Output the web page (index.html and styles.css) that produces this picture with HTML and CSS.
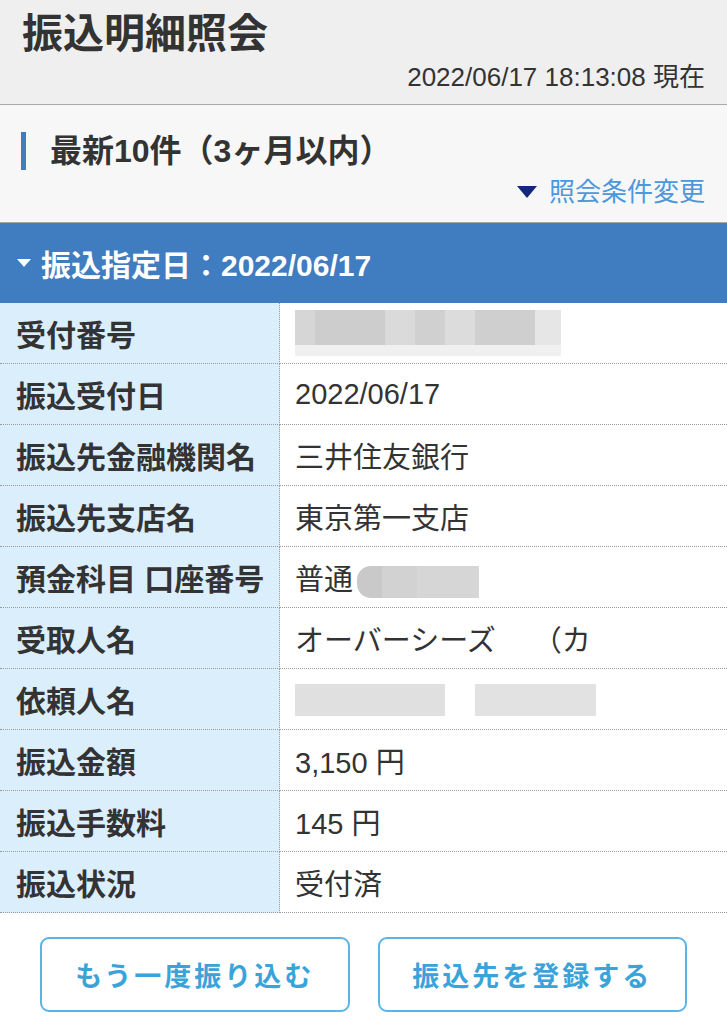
FILE: index.html
```html
<!DOCTYPE html>
<html lang="ja">
  <head>
    <meta charset="UTF-8" />
    <title>振込明細照会</title>
    <link rel="stylesheet" href="styles.css">
  </head>
  <body>
    <header class="page-head">
      <h1>振込明細照会</h1>
      <p class="stamp">2022/06/17 18:13:08 現在</p>
    </header>

    <section class="filter">
      <h2>最新10件（3ヶ月以内）</h2>
      <a class="change" href="#"><span class="tri"></span>照会条件変更</a>
    </section>

    <div class="band"><span class="tri-w"></span>振込指定日：2022/06/17</div>

    <table class="detail">
      <tr>
        <th>受付番号</th>
        <td><span class="mask mask-num"></span></td>
      </tr>
      <tr>
        <th>振込受付日</th>
        <td>2022/06/17</td>
      </tr>
      <tr>
        <th>振込先金融機関名</th>
        <td>三井住友銀行</td>
      </tr>
      <tr>
        <th>振込先支店名</th>
        <td>東京第一支店</td>
      </tr>
      <tr>
        <th>預金科目 口座番号</th>
        <td>普通 <span class="mask mask-acct"></span></td>
      </tr>
      <tr>
        <th>受取人名</th>
        <td>オーバーシーズ　 （カ</td>
      </tr>
      <tr>
        <th>依頼人名</th>
        <td><span class="mask mask-name"></span><span class="mask mask-name2"></span></td>
      </tr>
      <tr>
        <th>振込金額</th>
        <td>3,150 円</td>
      </tr>
      <tr>
        <th>振込手数料</th>
        <td>145 円</td>
      </tr>
      <tr>
        <th>振込状況</th>
        <td>受付済</td>
      </tr>
    </table>

    <div class="actions">
      <a class="btn" href="#">もう一度振り込む</a>
      <a class="btn" href="#">振込先を登録する</a>
    </div>
  </body>
</html>
```

FILE: styles.css
```css
body {
  margin: 0;
  font-family: "Liberation Sans", "Noto Sans CJK JP", sans-serif;
  color: #333;
  background: #fff;
}

.page-head {
  background: #efefef;
  height: 105px;
  box-sizing: border-box;
  padding: 10px 22px 0 22px;
  border-bottom: 1px solid #a8a8a8;
}

.page-head h1 {
  margin: 0;
  font-size: 41px;
  line-height: 48px;
  font-weight: bold;
  color: #333;
}

.stamp {
  margin: 2px 0 0;
  text-align: right;
  font-size: 26px;
  line-height: 34px;
}

.filter {
  background: #f7f7f7;
  height: 118px;
  box-sizing: border-box;
  padding: 27px 22px 0 21px;
  border-bottom: 1px solid #a8a8a8;
}

.filter h2 {
  margin: 0;
  font-size: 32px;
  line-height: 38px;
  font-weight: bold;
  padding-left: 24px;
  border-left: 5px solid #3f7cc0;
}

.change {
  display: flex;
  justify-content: flex-end;
  align-items: center;
  margin-top: 5px;
  color: #4d97dc;
  font-size: 26px;
  line-height: 34px;
  text-decoration: none;
}

.tri {
  width: 0;
  height: 0;
  border-left: 10px solid transparent;
  border-right: 10px solid transparent;
  border-top: 12px solid #13287a;
  margin-right: 12px;
}

.band {
  background: #3f7cc0;
  color: #fff;
  height: 80px;
  display: flex;
  align-items: center;
  padding-left: 17px;
  font-size: 30px;
  font-weight: bold;
}

.tri-w {
  width: 0;
  height: 0;
  border-left: 7px solid transparent;
  border-right: 7px solid transparent;
  border-top: 8px solid #fff;
  margin-right: 10px;
}

.detail {
  width: 100%;
  border-collapse: collapse;
}

.detail th,
.detail td {
  height: 60px;
  padding: 0 0 0 15px;
  border-bottom: 1px dotted #9a9a9a;
  font-size: 29px;
  text-align: left;
  vertical-align: middle;
  white-space: nowrap;
}

.detail th {
  width: 263px;
  background: #dbeefb;
  font-size: 30px;
  font-weight: bold;
  padding-left: 16px;
  border-right: 1px dotted #9a9a9a;
}

.detail td {
  font-weight: normal;
}

.mask {
  display: inline-block;
  vertical-align: middle;
}

.mask-num {
  width: 266px;
  height: 46px;
  background:
    linear-gradient(to bottom, transparent 35px, #f0f0f0 35px),
    linear-gradient(to right, #d6d6d6 0 20px, #cdcdcd 20px 90px, #dadada 90px 120px, #d0d0d0 120px 150px, #dcdcdc 150px 180px, #cfcfcf 180px 240px, #e6e6e6 240px);
}

.mask-acct {
  width: 122px;
  height: 32px;
  margin-left: -4px;
  border-radius: 14px 0 0 14px;
  background: linear-gradient(to right, #c9c9c9 0 25px, #d2d2d2 25px 60px, #d6d6d6 60px);
}

.mask-name {
  width: 150px;
  height: 32px;
  background: #e0e0e0;
}

.mask-name2 {
  width: 121px;
  height: 32px;
  margin-left: 30px;
  background: #e2e2e2;
}

.actions {
  display: flex;
  gap: 28px;
  padding: 24px 40px 0;
}

.btn {
  flex: 1;
  height: 75px;
  box-sizing: border-box;
  display: flex;
  align-items: center;
  justify-content: center;
  border: 2px solid #5ab4e6;
  border-radius: 9px;
  color: #3aa3da;
  font-size: 27px;
  font-weight: bold;
  letter-spacing: 3px;
  text-decoration: none;
}
```
